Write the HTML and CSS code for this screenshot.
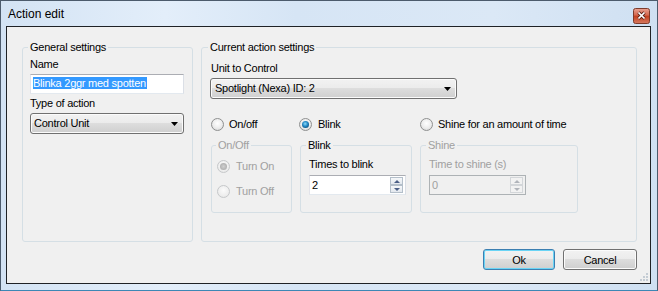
FILE: index.html
```html
<!DOCTYPE html>
<html lang="en">
<head>
    <meta charset="UTF-8">
    <title>Action edit</title>
    <link rel="stylesheet" href="styles.css">
</head>
<body>
    <div class="window">
        <div class="titlebar">
            <span class="title">Action edit</span>
            <span class="close-btn">
                <svg width="17" height="16" viewBox="0 0 17 16">
                    <defs>
                        <linearGradient id="closeGrad" x1="0" y1="0" x2="0" y2="1">
                            <stop offset="0" stop-color="#e9a393"/>
                            <stop offset="0.45" stop-color="#d4664d"/>
                            <stop offset="0.5" stop-color="#c23f1e"/>
                            <stop offset="1" stop-color="#d67a60"/>
                        </linearGradient>
                    </defs>
                    <rect x="0.5" y="0.5" width="16" height="15" rx="2" fill="url(#closeGrad)" stroke="#7d3b2b"/>
                    <path d="M5.5 4.5 L11.5 10.5 M11.5 4.5 L5.5 10.5" stroke="#5a2014" stroke-width="3.2"/>
                    <path d="M5.5 4.5 L11.5 10.5 M11.5 4.5 L5.5 10.5" stroke="#ffffff" stroke-width="1.7"/>
                </svg>
            </span>
        </div>

        <div class="client">
            <div class="groups">
                <fieldset class="group general">
                    <legend>General settings</legend>
                    <div class="label first">Name</div>
                    <div class="textbox"><span class="selection">Blinka 2ggr med spotten</span></div>
                    <div class="label">Type of action</div>
                    <div class="combo">
                        <span>Control Unit</span>
                        <svg class="combo-arrow" width="7" height="4" viewBox="0 0 7 4"><polygon points="0,0 7,0 3.5,4" fill="#000"/></svg>
                    </div>
                </fieldset>

                <fieldset class="group current">
                    <legend>Current action settings</legend>
                    <div class="label unit-label">Unit to Control</div>
                    <div class="combo unit-combo">
                        <span>Spotlight (Nexa) ID: 2</span>
                        <svg class="combo-arrow" width="7" height="4" viewBox="0 0 7 4"><polygon points="0,0 7,0 3.5,4" fill="#000"/></svg>
                    </div>

                    <div class="mode-row">
                        <div class="option"><span class="radio"></span>On/off</div>
                        <div class="option"><span class="radio checked"></span>Blink</div>
                        <div class="option"><span class="radio"></span>Shine for an amount of time</div>
                    </div>

                    <div class="sub-row">
                        <fieldset class="sub onoff disabled">
                            <legend>On/Off</legend>
                            <div class="option turn-on"><span class="radio checked"></span>Turn On</div>
                            <div class="option turn-off"><span class="radio"></span>Turn Off</div>
                        </fieldset>
                        <fieldset class="sub">
                            <legend>Blink</legend>
                            <div class="label sub-label">Times to blink</div>
                            <div class="spinbox">
                                <span class="spin-value">2</span>
                                <span class="spin-buttons">
                                    <span class="spin-btn"><span class="arrow-up"></span></span>
                                    <span class="spin-btn"><span class="arrow-down"></span></span>
                                </span>
                            </div>
                        </fieldset>
                        <fieldset class="sub disabled">
                            <legend>Shine</legend>
                            <div class="label sub-label">Time to shine (s)</div>
                            <div class="spinbox">
                                <span class="spin-value">0</span>
                                <span class="spin-buttons">
                                    <span class="spin-btn"><span class="arrow-up"></span></span>
                                    <span class="spin-btn"><span class="arrow-down"></span></span>
                                </span>
                            </div>
                        </fieldset>
                    </div>
                </fieldset>
            </div>

            <div class="buttons">
                <button class="btn btn-default">Ok</button>
                <button class="btn btn-cancel">Cancel</button>
            </div>

            <svg class="size-grip" width="8" height="8" viewBox="0 0 8 8">
                <rect x="6" y="0" width="2" height="2" fill="#c4ccd4"/>
                <rect x="3" y="3" width="2" height="2" fill="#c4ccd4"/>
                <rect x="6" y="3" width="2" height="2" fill="#c4ccd4"/>
                <rect x="0" y="6" width="2" height="2" fill="#c4ccd4"/>
                <rect x="3" y="6" width="2" height="2" fill="#c4ccd4"/>
                <rect x="6" y="6" width="2" height="2" fill="#c4ccd4"/>
            </svg>
        </div>
    </div>
</body>
</html>
```

FILE: styles.css
```css
body {
    margin: 0;
    font-family: "Liberation Sans", Arial, sans-serif;
    font-size: 11px;
    line-height: 13px;
    letter-spacing: -0.25px;
    color: #000000;
    background-color: #ffffff;
}
.window {
    box-sizing: border-box;
    width: 658px;
    height: 291px;
    border: 1px solid #4c5b6c;
    border-bottom-color: #3d87b5;
    padding: 0 6px 6px 5px;
    background: linear-gradient(90deg, #d3e3f4 0%, #e3eefa 25%, #d6e5f5 45%, #dbe8f6 75%, #cfe0f2 100%);
    display: flex;
    flex-direction: column;
}
.titlebar {
    height: 25px;
    display: flex;
    justify-content: space-between;
    align-items: flex-start;
    padding-left: 2px;
}
.title {
    font-size: 12px;
    line-height: 15px;
    letter-spacing: 0;
    margin-top: 6px;
}
.close-btn {
    display: block;
    width: 17px;
    height: 16px;
    margin-top: 7px;
    margin-right: 1px;
}
.client {
    position: relative;
    flex: 1;
    box-sizing: border-box;
    border: 1px solid #1f2226;
    background-color: #f0f0f0;
    padding: 14px 13px 13px 15px;
    display: flex;
    flex-direction: column;
}
.groups {
    flex: 1;
    display: flex;
    gap: 8px;
}
.group {
    margin: 0;
    border: 1px solid #d5dfe5;
    border-radius: 3px;
    min-width: 0;
}
.group legend {
    padding: 0 2px;
    line-height: 13px;
}
.general {
    width: 171px;
    box-sizing: border-box;
    padding: 4px 8px 0 7px;
}
.general legend {
    margin-left: -2px;
}
.current {
    flex: 1;
    padding: 0 0 0 9px;
}
.current legend {
    margin-left: -3px;
}
.label {
    margin-top: 3px;
}
.label.first {
    margin-top: 0;
}
.unit-label {
    margin-top: 8px;
}
.textbox {
    box-sizing: border-box;
    height: 20px;
    margin-top: 3px;
    border: 1px solid #abadb3;
    border-left-color: #e2e3ea;
    border-right-color: #dbdfe6;
    border-bottom-color: #e3e9ef;
    background-color: #ffffff;
    padding: 2px 0 0 2px;
}
.selection {
    background-color: #3399ff;
    color: #ffffff;
    padding-right: 1px;
}
.combo {
    box-sizing: border-box;
    height: 21px;
    margin-top: 3px;
    border: 1px solid #707070;
    border-radius: 3px;
    background: linear-gradient(#f2f2f2 0%, #ebebeb 50%, #dddddd 50%, #cfcfcf 100%);
    box-shadow: inset 0 0 0 1px #fbfbfb;
    display: flex;
    align-items: center;
    justify-content: space-between;
    padding: 0 5px 0 3px;
}
.unit-combo {
    width: 247px;
    margin-left: -1px;
}
.unit-combo span {
    padding-left: 1px;
}
.combo-arrow {
    display: block;
}
.mode-row {
    display: grid;
    grid-template-columns: 81px 112px 158px;
    gap: 8px;
    margin-top: 19px;
}
.option {
    display: flex;
    align-items: center;
    gap: 5px;
    height: 13px;
}
.radio {
    position: relative;
    flex: none;
    box-sizing: border-box;
    width: 13px;
    height: 13px;
    border-radius: 50%;
    border: 1px solid #8f9090;
    background: radial-gradient(circle at 50% 40%, #ffffff 0%, #ececec 55%, #cfcfcf 100%);
}
.mode-row .option:nth-child(2) .radio {
    margin-left: -1px;
}
.mode-row .option:nth-child(2) {
    gap: 6px;
}
.radio.checked::after {
    content: "";
    position: absolute;
    left: 2px;
    top: 2px;
    width: 7px;
    height: 7px;
    border-radius: 50%;
    background: radial-gradient(circle at 45% 40%, #8fdcf8 0%, #2a8fcb 40%, #0b5688 75%, #0a3e66 100%);
}
.sub-row {
    display: flex;
    gap: 8px;
    margin-top: 8px;
    height: 74px;
}
.sub {
    margin: 0;
    border: 1px solid #d5dfe5;
    border-radius: 3px;
    box-sizing: border-box;
    padding: 0 0 0 8px;
    min-width: 0;
}
.sub legend {
    padding: 0 2px;
    margin-left: -3px;
    line-height: 13px;
}
.onoff {
    width: 81px;
    padding-left: 5px;
}
.onoff legend {
    margin-left: -1px;
}
.sub:nth-child(2) {
    width: 112px;
}
.sub:nth-child(3) {
    width: 158px;
}
.turn-on {
    margin-top: 8px;
    gap: 6px;
}
.turn-off {
    margin-top: 12px;
    gap: 6px;
}
.disabled,
.disabled legend {
    color: #a0a0a0;
}
.disabled .radio {
    border-color: #c6c8ca;
    background: radial-gradient(circle at 50% 40%, #fbfbfb 0%, #eeeeee 60%, #e2e2e2 100%);
}
.disabled .radio.checked::after {
    background: radial-gradient(circle, #d0d0d0 0%, #b4b4b4 60%, #a8a8a8 100%);
}
.sub-label {
    margin-top: 6px;
}
.spinbox {
    box-sizing: border-box;
    width: 97px;
    height: 20px;
    margin-top: 4px;
    border: 1px solid #abadb3;
    border-left-color: #e2e3ea;
    border-right-color: #dbdfe6;
    border-bottom-color: #e3e9ef;
    background-color: #ffffff;
    display: flex;
    justify-content: space-between;
    padding: 1px 2px 1px 1px;
}
.spin-value {
    line-height: 16px;
    padding-left: 1px;
}
.spin-buttons {
    display: flex;
    flex-direction: column;
    width: 13px;
}
.spin-btn {
    flex: 1;
    box-sizing: border-box;
    border: 1px solid #b4bfca;
    background: linear-gradient(#f6f8fa, #e3e8ee);
    display: flex;
    align-items: center;
    justify-content: center;
}
.arrow-up {
    border-left: 3px solid transparent;
    border-right: 3px solid transparent;
    border-bottom: 3px solid #4b5f86;
}
.arrow-down {
    border-left: 3px solid transparent;
    border-right: 3px solid transparent;
    border-top: 3px solid #4b5f86;
}
.disabled .spinbox {
    background-color: #f0f0f0;
    border-color: #adb2b5;
}
.disabled .spin-btn {
    border-color: #d3d6d9;
    background: #f2f2f2;
}
.disabled .arrow-up {
    border-bottom-color: #b0b4ba;
}
.disabled .arrow-down {
    border-top-color: #b0b4ba;
}
.buttons {
    display: flex;
    justify-content: flex-end;
    gap: 8px;
    margin-top: 7px;
}
.btn {
    box-sizing: border-box;
    height: 21px;
    width: 72px;
    padding: 0;
    font-family: inherit;
    font-size: 11px;
    letter-spacing: inherit;
    color: #000000;
    border: 1px solid #707070;
    border-radius: 3px;
    background: linear-gradient(#f2f2f2 0%, #ebebeb 50%, #dddddd 50%, #cfcfcf 100%);
    box-shadow: inset 0 0 0 1px #fbfbfb;
}
.btn-default {
    border-color: #3c7fb1;
    box-shadow: inset 0 0 0 1px #6ad4f5;
}
.btn-cancel {
    width: 74px;
}
.size-grip {
    position: absolute;
    right: 2px;
    bottom: 2px;
}
```
